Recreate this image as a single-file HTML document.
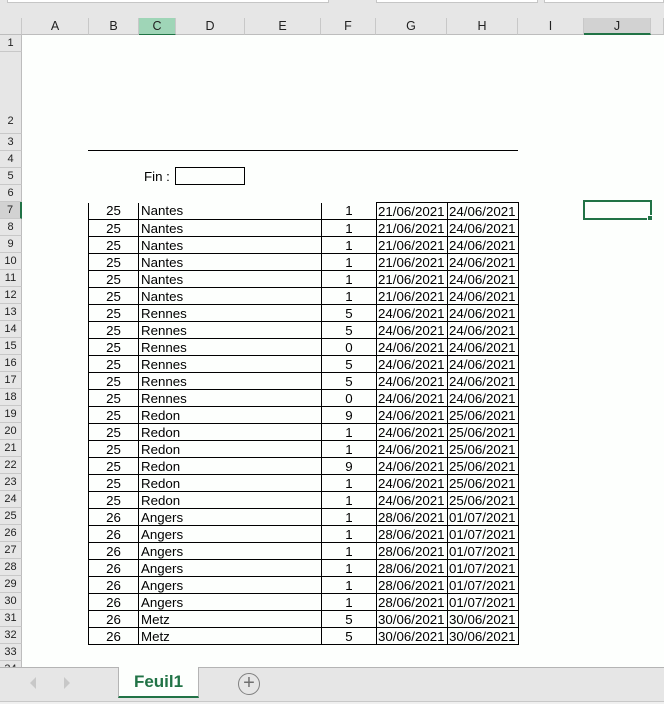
<!DOCTYPE html>
<html><head><style>
*{margin:0;padding:0;box-sizing:border-box}
body{width:664px;height:704px;overflow:hidden;background:#fdfffd;font-family:"Liberation Sans",Arial,sans-serif;position:relative}
.a{position:absolute}
.top{left:0;top:0;width:664px;height:18px;background:#e6e6e6}
.ch{top:18px;height:17px;background:#e6e6e6;border-right:1px solid #c8c8c8;border-bottom:1px solid #bdbdbd;font-size:12.5px;text-align:center;line-height:16px;color:#222}
.rh{left:0;width:22px;background:#e6e6e6;border-right:1px solid #bdbdbd;border-bottom:1px solid #c8c8c8;font-size:11px;text-align:center;color:#222}
table{border-collapse:collapse;position:absolute;left:88px;top:202px;font-size:13.3px;color:#000;table-layout:fixed;width:430px}
td{border:1px solid #000;height:17px;line-height:15px;padding:0 1px;white-space:nowrap;overflow:hidden}
td.c{text-align:center}
td.l{text-align:left;padding-left:2px}
tr:first-child td.nt{border-top:none}
</style></head><body>
<div class="a top"></div>
<div class="a" style="left:7px;top:0;width:322px;height:3px;background:#fff;border:1px solid #c6c6c6;border-top:none"></div>
<div class="a" style="left:376px;top:0;width:162px;height:3px;background:#fff;border:1px solid #c6c6c6;border-top:none"></div>
<div class="a" style="left:544px;top:0;width:120px;height:3px;background:#fff;border:1px solid #c6c6c6;border-top:none"></div>
<div class="a ch" style="left:0;width:22px"></div>
<div class="a ch" style="left:22px;width:67px">A</div>
<div class="a ch" style="left:89px;width:50px">B</div>
<div class="a ch" style="left:139px;width:37px;background:#9fd5b7;border-bottom:1px solid #217346">C</div>
<div class="a ch" style="left:176px;width:69px">D</div>
<div class="a ch" style="left:245px;width:76px">E</div>
<div class="a ch" style="left:321px;width:55px">F</div>
<div class="a ch" style="left:376px;width:71px">G</div>
<div class="a ch" style="left:447px;width:71px">H</div>
<div class="a ch" style="left:518px;width:66px">I</div>
<div class="a ch" style="left:584px;width:67px;background:#d2d2d2;border-bottom:2px solid #217346">J</div>
<div class="a ch" style="left:651px;width:13px"></div>
<div class="a rh" style="top:35px;height:17px;line-height:17px">1</div>
<div class="a rh" style="top:52px;height:82px;line-height:138px">2</div>
<div class="a rh" style="top:134px;height:17px;line-height:17px">3</div>
<div class="a rh" style="top:151px;height:17px;line-height:17px">4</div>
<div class="a rh" style="top:168px;height:17px;line-height:17px">5</div>
<div class="a rh" style="top:185px;height:17px;line-height:17px">6</div>
<div class="a rh" style="top:202px;height:17px;line-height:17px;background:#d2d2d2;border-right:2px solid #217346">7</div>
<div class="a rh" style="top:219px;height:17px;line-height:17px">8</div>
<div class="a rh" style="top:236px;height:17px;line-height:17px">9</div>
<div class="a rh" style="top:253px;height:17px;line-height:17px">10</div>
<div class="a rh" style="top:270px;height:17px;line-height:17px">11</div>
<div class="a rh" style="top:287px;height:17px;line-height:17px">12</div>
<div class="a rh" style="top:304px;height:17px;line-height:17px">13</div>
<div class="a rh" style="top:321px;height:17px;line-height:17px">14</div>
<div class="a rh" style="top:338px;height:17px;line-height:17px">15</div>
<div class="a rh" style="top:355px;height:17px;line-height:17px">16</div>
<div class="a rh" style="top:372px;height:17px;line-height:17px">17</div>
<div class="a rh" style="top:389px;height:17px;line-height:17px">18</div>
<div class="a rh" style="top:406px;height:17px;line-height:17px">19</div>
<div class="a rh" style="top:423px;height:17px;line-height:17px">20</div>
<div class="a rh" style="top:440px;height:17px;line-height:17px">21</div>
<div class="a rh" style="top:457px;height:17px;line-height:17px">22</div>
<div class="a rh" style="top:474px;height:17px;line-height:17px">23</div>
<div class="a rh" style="top:491px;height:17px;line-height:17px">24</div>
<div class="a rh" style="top:508px;height:17px;line-height:17px">25</div>
<div class="a rh" style="top:525px;height:17px;line-height:17px">26</div>
<div class="a rh" style="top:542px;height:17px;line-height:17px">27</div>
<div class="a rh" style="top:559px;height:17px;line-height:17px">28</div>
<div class="a rh" style="top:576px;height:17px;line-height:17px">29</div>
<div class="a rh" style="top:593px;height:17px;line-height:17px">30</div>
<div class="a rh" style="top:610px;height:17px;line-height:17px">31</div>
<div class="a rh" style="top:627px;height:17px;line-height:17px">32</div>
<div class="a rh" style="top:644px;height:17px;line-height:17px">33</div>
<div class="a rh" style="top:661px;height:17px;line-height:17px">34</div>
<div class="a" style="left:88px;top:150px;width:430px;height:1px;background:#000"></div>
<div class="a" style="left:144px;top:168px;font-size:13.3px;line-height:17px">Fin :</div>
<div class="a" style="left:175px;top:167px;width:70px;height:18px;border:1px solid #000"></div>
<div class="a" style="left:583px;top:200px;width:69px;height:20px;border:2px solid #217346"></div>
<div class="a" style="left:647px;top:215px;width:6px;height:6px;background:#217346;border:1px solid #fff"></div>
<table>
<colgroup><col style="width:50px"><col style="width:183px"><col style="width:55px"><col style="width:71px"><col style="width:71px"></colgroup>
<tr><td class="c nt">25</td><td class="l nt">Nantes</td><td class="c nt">1</td><td>21/06/2021</td><td>24/06/2021</td></tr>
<tr><td class="c">25</td><td class="l">Nantes</td><td class="c">1</td><td>21/06/2021</td><td>24/06/2021</td></tr>
<tr><td class="c">25</td><td class="l">Nantes</td><td class="c">1</td><td>21/06/2021</td><td>24/06/2021</td></tr>
<tr><td class="c">25</td><td class="l">Nantes</td><td class="c">1</td><td>21/06/2021</td><td>24/06/2021</td></tr>
<tr><td class="c">25</td><td class="l">Nantes</td><td class="c">1</td><td>21/06/2021</td><td>24/06/2021</td></tr>
<tr><td class="c">25</td><td class="l">Nantes</td><td class="c">1</td><td>21/06/2021</td><td>24/06/2021</td></tr>
<tr><td class="c">25</td><td class="l">Rennes</td><td class="c">5</td><td>24/06/2021</td><td>24/06/2021</td></tr>
<tr><td class="c">25</td><td class="l">Rennes</td><td class="c">5</td><td>24/06/2021</td><td>24/06/2021</td></tr>
<tr><td class="c">25</td><td class="l">Rennes</td><td class="c">0</td><td>24/06/2021</td><td>24/06/2021</td></tr>
<tr><td class="c">25</td><td class="l">Rennes</td><td class="c">5</td><td>24/06/2021</td><td>24/06/2021</td></tr>
<tr><td class="c">25</td><td class="l">Rennes</td><td class="c">5</td><td>24/06/2021</td><td>24/06/2021</td></tr>
<tr><td class="c">25</td><td class="l">Rennes</td><td class="c">0</td><td>24/06/2021</td><td>24/06/2021</td></tr>
<tr><td class="c">25</td><td class="l">Redon</td><td class="c">9</td><td>24/06/2021</td><td>25/06/2021</td></tr>
<tr><td class="c">25</td><td class="l">Redon</td><td class="c">1</td><td>24/06/2021</td><td>25/06/2021</td></tr>
<tr><td class="c">25</td><td class="l">Redon</td><td class="c">1</td><td>24/06/2021</td><td>25/06/2021</td></tr>
<tr><td class="c">25</td><td class="l">Redon</td><td class="c">9</td><td>24/06/2021</td><td>25/06/2021</td></tr>
<tr><td class="c">25</td><td class="l">Redon</td><td class="c">1</td><td>24/06/2021</td><td>25/06/2021</td></tr>
<tr><td class="c">25</td><td class="l">Redon</td><td class="c">1</td><td>24/06/2021</td><td>25/06/2021</td></tr>
<tr><td class="c">26</td><td class="l">Angers</td><td class="c">1</td><td>28/06/2021</td><td>01/07/2021</td></tr>
<tr><td class="c">26</td><td class="l">Angers</td><td class="c">1</td><td>28/06/2021</td><td>01/07/2021</td></tr>
<tr><td class="c">26</td><td class="l">Angers</td><td class="c">1</td><td>28/06/2021</td><td>01/07/2021</td></tr>
<tr><td class="c">26</td><td class="l">Angers</td><td class="c">1</td><td>28/06/2021</td><td>01/07/2021</td></tr>
<tr><td class="c">26</td><td class="l">Angers</td><td class="c">1</td><td>28/06/2021</td><td>01/07/2021</td></tr>
<tr><td class="c">26</td><td class="l">Angers</td><td class="c">1</td><td>28/06/2021</td><td>01/07/2021</td></tr>
<tr><td class="c">26</td><td class="l">Metz</td><td class="c">5</td><td>30/06/2021</td><td>30/06/2021</td></tr>
<tr><td class="c">26</td><td class="l">Metz</td><td class="c">5</td><td>30/06/2021</td><td>30/06/2021</td></tr>
</table>
<div class="a" style="left:0;top:667px;width:664px;height:34px;background:#e6e6e6;border-top:1px solid #b4b4b4"></div>
<div class="a" style="left:0;top:701px;width:664px;height:3px;background:#f0f0f0;border-top:1px solid #c8c8c8"></div>
<div class="a" style="left:30px;top:677px;width:0;height:0;border-top:6px solid transparent;border-bottom:6px solid transparent;border-right:6px solid #c8c8c8"></div>
<div class="a" style="left:64px;top:677px;width:0;height:0;border-top:6px solid transparent;border-bottom:6px solid transparent;border-left:6px solid #c8c8c8"></div>
<div class="a" style="left:118px;top:667px;width:81px;height:31px;background:#fdfffd;border-left:1px solid #b4b4b4;border-right:1px solid #b4b4b4;border-bottom:2px solid #217346;text-align:center;font-weight:bold;font-size:17px;color:#217346;line-height:30px">Feuil1</div>
<div class="a" style="left:238px;top:673px;width:22px;height:22px;border:1.5px solid #808080;border-radius:50%;text-align:center;line-height:19px;font-size:20px;color:#707070">+</div>
</body></html>
